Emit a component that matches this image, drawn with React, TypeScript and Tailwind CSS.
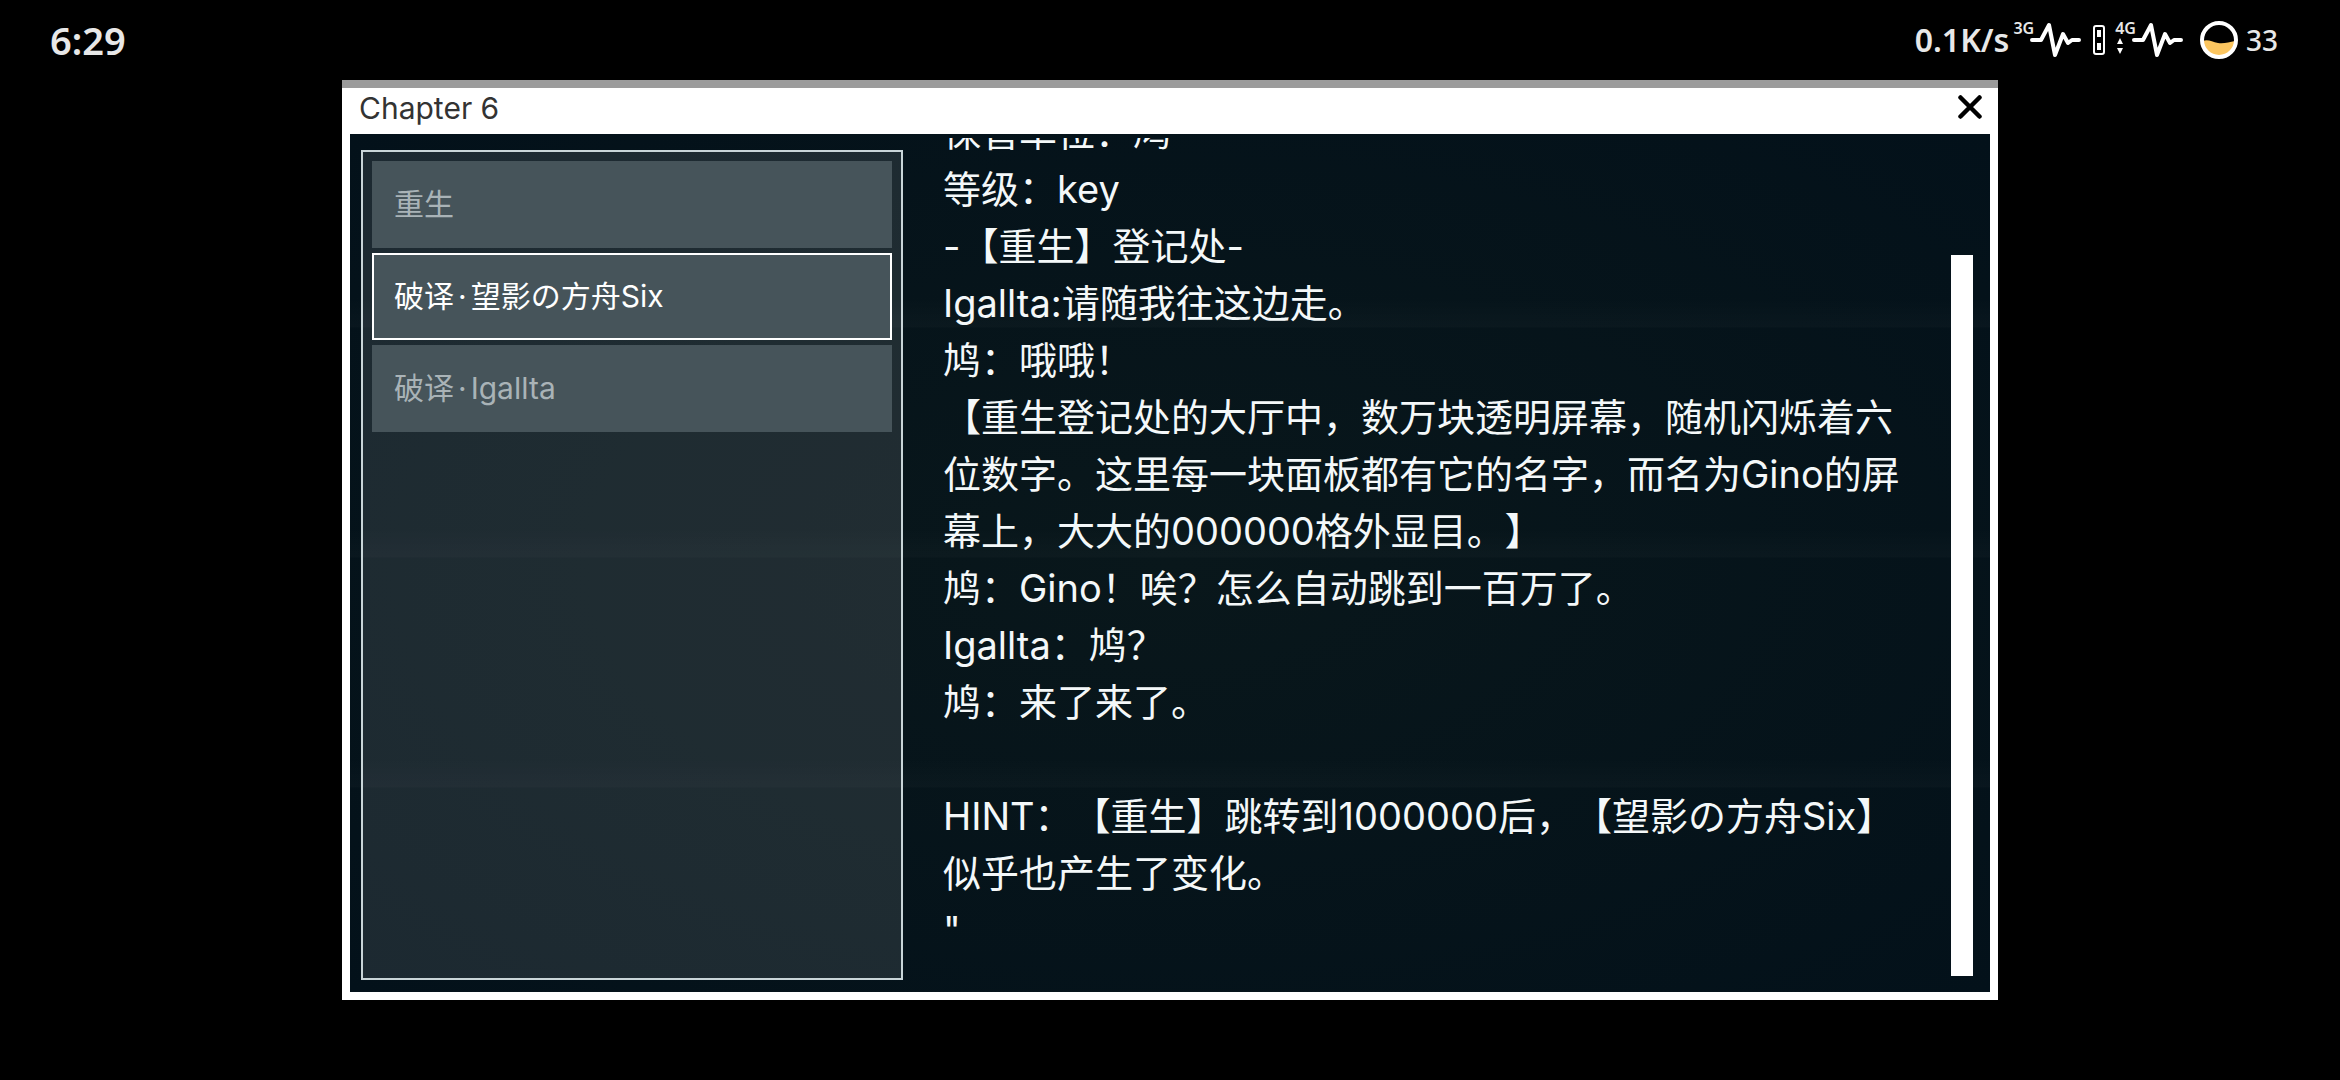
import React, { Fragment, useState } from 'react'
import { clsx } from 'clsx'

// ============================================================================
// Data
// ============================================================================

interface Entry {
  id: string
  title: string
}

const ENTRIES: Entry[] = [
  { id: 'rebirth', title: '重生' },
  { id: 'decode-six', title: '破译·望影の方舟Six' },
  { id: 'decode-igallta', title: '破译·Igallta' },
]

const STORY: string[] = [
  '保管单位：鸠',
  '等级：key',
  '-【重生】登记处-',
  'Igallta:请随我往这边走。',
  '鸠：哦哦！',
  '【重生登记处的大厅中，数万块透明屏幕，随机闪烁着六位数字。这里每一块面板都有它的名字，而名为Gino的屏幕上，大大的000000格外显目。】',
  '鸠：Gino！唉？怎么自动跳到一百万了。',
  'Igallta：鸠？',
  '鸠：来了来了。',
  '',
  'HINT：【重生】跳转到1000000后，【望影の方舟Six】似乎也产生了变化。',
  '"',
]

// ============================================================================
// Status Bar
// ============================================================================

function PulseIcon() {
  return (
    <svg viewBox="0 0 52 36" className="-ml-[5px] h-9 w-[52px]" fill="none" aria-hidden="true">
      <path
        d="M3 18h9l8-15 6 30 8-21 5 9 4-3h7"
        stroke="white"
        strokeWidth="4"
        strokeLinecap="round"
        strokeLinejoin="round"
      />
    </svg>
  )
}

function SimIcon() {
  return (
    <svg viewBox="0 0 12 30" className="h-[30px] w-3" fill="none" aria-hidden="true">
      <rect x="1" y="1" width="10" height="28" rx="2" stroke="white" strokeWidth="2" />
      <rect x="4" y="5" width="4" height="7" fill="white" />
      <rect x="4" y="18" width="4" height="7" fill="white" />
    </svg>
  )
}

function BatteryIcon() {
  return (
    <svg viewBox="0 0 38 38" className="size-[38px]" fill="none" aria-hidden="true">
      <path d="M3 20c5-2 9 1 15 2 6 1 11-1 17-2a16 16 0 0 1-32 0z" fill="#fbc55f" />
      <circle cx="19" cy="19" r="17" stroke="white" strokeWidth="4" />
    </svg>
  )
}

function NetworkLabel({ label, arrows = false }: { label: string; arrows?: boolean }) {
  return (
    <div className="flex h-10 flex-col items-center gap-0.5">
      <span className="text-[16px] leading-4 font-semibold">{label}</span>
      {arrows && (
        <svg viewBox="0 0 6 16" className="-ml-3 h-4 w-[6px]" fill="white" aria-hidden="true">
          <path d="M3 0l3 6H0zM3 16l3-6H0z" />
        </svg>
      )}
    </div>
  )
}

function StatusBar() {
  return (
    <header className="flex h-20 shrink-0 items-center justify-between px-[50px] font-['Noto_Sans',sans-serif] text-[#e8e8e8]">
      <time className="text-[38px] leading-10 font-semibold">6:29</time>
      <div className="flex items-center pr-3">
        <span className="text-[32px] leading-8 font-semibold">0.1K/s</span>
        <div className="ml-1 flex items-center">
          <NetworkLabel label="3G" />
          <PulseIcon />
        </div>
        <div className="ml-3">
          <SimIcon />
        </div>
        <div className="ml-[10px] flex items-center">
          <NetworkLabel label="4G" arrows />
          <PulseIcon />
        </div>
        <div className="ml-[17px] flex items-center gap-2">
          <BatteryIcon />
          <span className="text-[28px] leading-7 font-medium">33</span>
        </div>
      </div>
    </header>
  )
}

// ============================================================================
// Chapter Window
// ============================================================================

interface EntryListProps {
  selected: string
  onSelect: (id: string) => void
}

function EntryTitle({ title }: { title: string }) {
  return (
    <>
      {title.split('·').map((part, i) => (
        <Fragment key={part}>
          {i > 0 && <span className="mx-1">·</span>}
          {part}
        </Fragment>
      ))}
    </>
  )
}

function EntryList({ selected, onSelect }: EntryListProps) {
  return (
    <nav
      aria-label="Entries"
      className="flex w-[34%] max-w-[542px] shrink-0 flex-col gap-[5px] border-2 border-[#c9d5d8] bg-white/10 p-[9px]"
    >
      {ENTRIES.map((entry) => (
        <button
          key={entry.id}
          type="button"
          aria-pressed={entry.id === selected}
          onClick={() => onSelect(entry.id)}
          className={clsx(
            'h-[87px] border-2 bg-[#46545a] px-5 text-left text-[30px]',
            entry.id === selected ? 'border-white text-white' : 'border-[#46545a] text-[#a9b3b7]'
          )}
        >
          <EntryTitle title={entry.title} />
        </button>
      ))}
    </nav>
  )
}

function StoryText() {
  return (
    <div id="story" className="flex min-w-0 flex-1 flex-col overflow-hidden">
      {/* Scrolled to the end, so the text sits on the bottom edge */}
      <div className="flex min-h-0 flex-1 flex-col justify-end pb-[21px] text-[38px] leading-[57px] text-[#f4f8f9]">
        {STORY.map((line, i) => (
          <p key={i} className="min-h-[57px] shrink-0">
            {line}
          </p>
        ))}
      </div>
    </div>
  )
}

function ChapterWindow() {
  const [selected, setSelected] = useState('decode-six')

  return (
    <main className="mx-auto mb-20 flex min-h-0 w-[71%] max-w-[1656px] flex-1 flex-col bg-white">
      <div className="h-2 shrink-0 bg-[#9b9b9b]" />
      <div className="flex h-[46px] shrink-0 items-start justify-between pr-3 pl-[17px]">
        <h1 className="text-[30px] leading-10 text-[#333]">Chapter 6</h1>
        <button type="button" aria-label="Close" className="p-1 pt-[7px]">
          <svg viewBox="0 0 24 24" className="size-6" aria-hidden="true">
            <path d="M2.5 2.5l19 19M21.5 2.5l-19 19" stroke="black" strokeWidth="4.5" strokeLinecap="round" />
          </svg>
        </button>
      </div>

      <div className="mx-2 mb-2 flex min-h-0 flex-1 bg-[#051218] bg-[repeating-linear-gradient(to_bottom,transparent_-36px,transparent_164px,rgba(255,255,255,0.02)_193px,transparent_194px),radial-gradient(ellipse_at_center,#09171b,#03111a)] pt-1 pr-[17px] pb-3 pl-[11px]">
        <div className="mt-3 flex w-full min-w-0">
          <EntryList selected={selected} onSelect={setSelected} />
          <div className="-mt-3 ml-10 flex min-w-0 flex-1">
            <StoryText />
          </div>
          <div className="ml-10 flex w-[22px] shrink-0 items-end pb-1">
            <div
              role="scrollbar"
              aria-label="Story"
              aria-orientation="vertical"
              aria-controls="story"
              aria-valuenow={100}
              className="h-[88%] max-h-[721px] w-full bg-white"
            />
          </div>
        </div>
      </div>
    </main>
  )
}

export default function App() {
  return (
    <div
      lang="zh-CN"
      className="flex h-screen flex-col overflow-hidden bg-black font-[Inter,'Noto_Sans_CJK_SC',sans-serif] [text-spacing-trim:space-all]"
    >
      <StatusBar />
      <ChapterWindow />
    </div>
  )
}
